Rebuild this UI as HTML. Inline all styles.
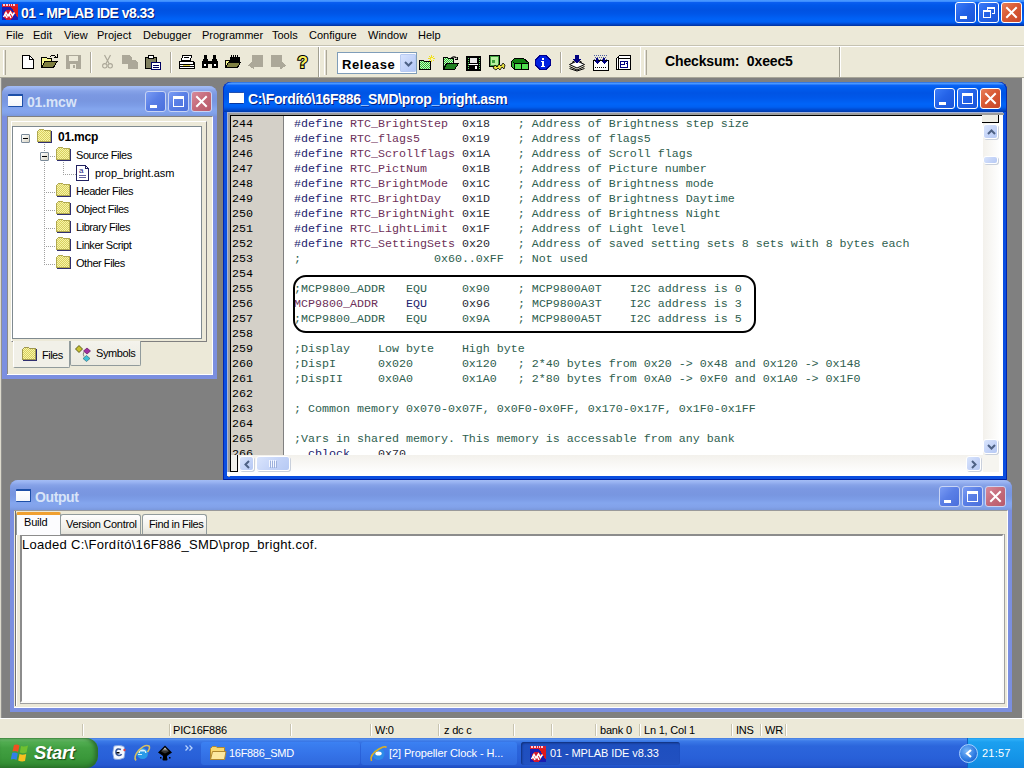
<!DOCTYPE html>
<html><head><meta charset="utf-8">
<style>
*{margin:0;padding:0;box-sizing:border-box}
html,body{width:1024px;height:768px;overflow:hidden;background:#808080;font-family:"Liberation Sans",sans-serif;font-size:11px;color:#000}
.a{position:absolute}
svg{position:absolute;overflow:visible}
#title{left:0;top:0;width:1024px;height:26px;background:linear-gradient(#4d9cff 0,#3a8cff 1.5px,#0a5ef0 2.5px,#0058ea 5px,#0052e2 10px,#0056e8 14px,#0062f6 19px,#0060f4 22px,#0048d0 24px,#00309a 26px)}
#title .t{left:21px;top:5px;color:#fff;font-weight:bold;font-size:14px;letter-spacing:-0.55px;text-shadow:1px 1px 0 #0a1e78;}
#menu{left:0;top:26px;width:1024px;height:19px;background:#ece9d8}
#menu span{position:absolute;top:3px}
#tb{left:0;top:47px;width:1024px;height:31px;background:#ece9d8}
.grip{position:absolute;width:3px;border-left:1px solid #fff;border-right:1px solid #aca899;background:#e0ddd0}
.vsep{position:absolute;width:2px;border-left:1px solid #aca899;border-right:1px solid #fff}
.win{position:absolute;border-radius:8px 8px 0 0}
.ttl{position:absolute;left:0;top:0;right:0;height:30px;border-radius:8px 8px 0 0}
.act{background:#0a4ee0;box-shadow:inset 1px 0 0 #0026b0,inset -1px 0 0 #0026b0,inset 0 -1px 0 #0020a0}
.act .ttl{background:linear-gradient(#1050c8 0,#5aa2ff 1px,#3a8cff 2px,#0a62f4 3.5px,#005cee 6px,#0054e4 11px,#0058ea 16px,#0064f8 22px,#0060f2 25px,#0048cc 28px,#003aa8 30px);box-shadow:inset 1px 0 0 #0a30b8,inset -1px 0 0 #0a2aa8}
.ina{background:#7b8fe0}
.ina .ttl{background:linear-gradient(#a4bdf4 0,#9ab4f2 2px,#86a2e8 5px,#7b98e2 9px,#7896e0 15px,#7c9ce6 19px,#84a6ee 23px,#82a2ea 27px,#7a98dc 30px)}
.ttl .tx{position:absolute;top:8px;left:25px;font-weight:bold;font-size:14px;white-space:pre}
.act .ttl .tx{color:#fff;text-shadow:1px 1px 0 #0a2080}
.ina .ttl .tx{color:#d8e4f8}
.wico{position:absolute;left:6px;top:9px;width:15px;height:13px;background:linear-gradient(#fff,#f4f6fa);border-top:2px solid #1d4fa8;border-right:1px solid #1d4fa8;border-bottom:1px solid #1d4fa8;border-radius:1px}
.act .wico{border-color:#fff;background:#fff}
.cli{position:absolute;background:#ece9d8}
.mono{font-family:"Liberation Mono",monospace}
.code{position:absolute;left:294px;top:117px;font-family:"Liberation Mono",monospace;font-size:11.667px;line-height:15px;white-space:pre;color:#000}
.code i{font-style:normal}
.d{color:#22226e}.s{color:#6e3059}.n{color:#2a2a34}.c{color:#2e5e4e}
.sbtn{position:absolute;border:1px solid #fff;border-radius:3px;background:linear-gradient(135deg,#dae5fc 0,#c6d5f8 50%,#b6c9f4 100%);box-shadow:1px 1px 0 #c9d0dc}
.trk{position:absolute;background:#fdfdfa}
.st{position:absolute;top:5px;white-space:pre;letter-spacing:-0.2px}
.ssep{position:absolute;top:5px;width:2px;height:12px;background:#c8c4b0;border-right:1px solid #fff}
.tabtx{position:absolute;white-space:pre}
.cli span{white-space:pre}
.task{position:absolute;top:742px;height:23px;border-radius:3px;background:linear-gradient(#3c81f3 0,#3a7ef0 2px,#3573e8 12px,#2f68dc 24px);color:#fff;font-size:11px}
.task span{position:absolute;top:5px;white-space:pre;letter-spacing:-0.3px}
</style></head><body>

<!-- ============ TITLE ============ -->
<div id="title" class="a">
  <svg style="left:2px;top:4px" width="16" height="16" shape-rendering="crispEdges"><rect x="0" y="0" width="16" height="16" fill="#1c1cb0"/><rect x="0" y="0" width="16" height="3" fill="#d82030"/><path d="M1 1 H3 M4 1 H6 M7 1 H8 M9 1 H10 M11 1 H13" stroke="#ffd0d0" stroke-width="1.2"/><path d="M9 3 H16 V14Z" fill="#e01818"/><circle cx="6.5" cy="11" r="5" fill="#d01830"/><path d="M1.5 13 L4 8.5 L6 12 L8.5 8 L10.5 11.5 L12.5 8.5 M3 10.5 L5 14 M7 10 L9 14" stroke="#fff" stroke-width="1.5" fill="none" shape-rendering="auto"/></svg>
  <div class="a t">01 - MPLAB IDE v8.33</div>
  <div class="a" style="left:955px;top:2px;width:21px;height:21px;border:1px solid #fff;border-radius:3px;background:linear-gradient(135deg,#3c7cf8 0,#2463e8 45%,#1a55d8 100%)"><div class="a" style="left:4px;top:13px;width:7px;height:3px;background:#fff"></div></div><div class="a" style="left:978px;top:2px;width:21px;height:21px;border:1px solid #fff;border-radius:3px;background:linear-gradient(135deg,#3c7cf8 0,#2463e8 45%,#1a55d8 100%)"><div class="a" style="left:8px;top:4px;width:8px;height:7px;border-top:2px solid #fff;border-right:1px solid #fff"></div><div class="a" style="left:8px;top:4px;width:1px;height:3px;background:#fff"></div><div class="a" style="left:4px;top:7px;width:8px;height:8px;border:1px solid #fff;border-top:2px solid #fff"></div><div class="a" style="left:13px;top:10px;width:3px;height:1px;background:#fff"></div></div><div class="a" style="left:1001px;top:2px;width:21px;height:21px;border:1px solid #fff;border-radius:3px;background:linear-gradient(135deg,#e8805a 0,#d85a34 45%,#c8462a 100%)"><svg style="left:0;top:0" width="19" height="19"><path d="M5 5 L14 14 M14 5 L5 14" stroke="#fff" stroke-width="2" stroke-linecap="square"/></svg></div>
</div>

<!-- ============ MENU ============ -->
<div id="menu" class="a">
  <span style="left:6px">File</span><span style="left:33px">Edit</span><span style="left:64px">View</span><span style="left:97px">Project</span><span style="left:143px">Debugger</span><span style="left:202px">Programmer</span><span style="left:272px">Tools</span><span style="left:309px">Configure</span><span style="left:368px">Window</span><span style="left:418px">Help</span>
</div>
<div class="a" style="left:0;top:45px;width:1024px;height:1px;background:#c5c2b2"></div>
<div class="a" style="left:0;top:46px;width:1024px;height:1px;background:#fff"></div>

<!-- ============ TOOLBAR ============ -->
<div id="tb" class="a">
  <div class="grip" style="left:3px;top:3px;height:25px"></div><svg style="left:22px;top:8px" width="12" height="14" shape-rendering="crispEdges"><path d="M0.5 0.5 H7.5 L11.5 4.5 V13.5 H0.5Z" fill="#fff" stroke="#000"/><path d="M7.5 0.5 V4.5 H11.5" fill="none" stroke="#000"/></svg><svg style="left:41px;top:7px" width="17" height="15" shape-rendering="crispEdges"><path d="M0.5 3.5 H5.5 L6.5 4.5 H10.5 V13.5 H0.5Z" fill="#f8f890" stroke="#000"/><path d="M0.5 13.5 L4 7.5 H16 L12.5 13.5Z" fill="#808040" stroke="#000"/><path d="M9 3 Q12 0 15 3" fill="none" stroke="#000"/><path d="M13 3 H16 V0" fill="none" stroke="#000"/></svg><svg style="left:66px;top:8px" width="15" height="14" shape-rendering="crispEdges"><rect x="0" y="0" width="15" height="14" fill="#aca899"/><rect x="3" y="1" width="9" height="5" fill="#ece9d8"/><rect x="4" y="9" width="6" height="5" fill="#ece9d8"/><rect x="7" y="10" width="2" height="3" fill="#aca899"/></svg><div class="vsep" style="left:90px;top:5px;height:21px"></div><svg style="left:102px;top:8px" width="11" height="14"><path d="M2.5 0 L7 8.5 M8.5 0 L4 8.5" stroke="#aca899" stroke-width="1.2" fill="none"/><circle cx="2.8" cy="10.8" r="2.2" fill="none" stroke="#aca899" stroke-width="1.1"/><circle cx="8.2" cy="10.8" r="2.2" fill="none" stroke="#aca899" stroke-width="1.1"/></svg><svg style="left:122px;top:8px" width="16" height="14" shape-rendering="crispEdges"><path d="M0 0 H7 L10 3 V5 H13 L16 8 V14 H6 V9 H0Z" fill="#aca899"/></svg><svg style="left:145px;top:8px" width="16" height="15" shape-rendering="crispEdges"><rect x="0.5" y="2.5" width="11" height="11" fill="#808060" stroke="#000"/><rect x="3.5" y="0.5" width="5" height="3" fill="#fff" stroke="#000"/><rect x="6.5" y="7.5" width="9" height="7" fill="#fff" stroke="#000060"/><path d="M8 10.5 H14 M8 12.5 H14" stroke="#000060"/></svg><div class="vsep" style="left:170px;top:5px;height:21px"></div><svg style="left:179px;top:8px" width="16" height="15" shape-rendering="crispEdges"><path d="M3.5 0.5 H12.5 L11.5 5.5 H2.5Z" fill="#fff" stroke="#000"/><path d="M5 2.5 H10" stroke="#000"/><path d="M0.5 6.5 H14.5 L15.5 8 V13.5 H0.5Z" fill="#fff" stroke="#000"/><path d="M0.5 9.5 H15.5 M1 11.5 H15" stroke="#000"/><rect x="4" y="10" width="7" height="1" fill="#e0d040"/><path d="M14.5 6.5 V9" stroke="#000"/></svg><svg style="left:202px;top:8px" width="16" height="14" shape-rendering="crispEdges"><path d="M1 4 H6 V13 H0 V8Z M10 4 H15 L16 8 V13 H10Z M2 0 H5 V4 H2Z M11 0 H14 V4 H11Z M6 6 H10 V9 H6Z" fill="#000"/><rect x="2" y="9" width="2" height="2" fill="#fff"/><rect x="12" y="9" width="2" height="2" fill="#fff"/></svg><svg style="left:225px;top:7px" width="16" height="15" shape-rendering="crispEdges"><path d="M0.5 6.5 H4.5 V13.5 H0.5Z" fill="#f8f890" stroke="#000"/><path d="M0.5 13.5 L3.5 8.5 H15.5 L12.5 13.5Z" fill="#808040" stroke="#000"/><path d="M5 8 V3 H6 V1 H7 V3 H8 V1 H9 V3 H10 V1 H11 V3 H12 V1 H13 V3 H15 V8Z" fill="#000"/></svg><svg style="left:248px;top:8px" width="16" height="16" shape-rendering="crispEdges"><path d="M4 0 H15 V12 H6 V14.5 L0 10.5 L4 6.5Z" fill="#aca899"/></svg><svg style="left:271px;top:8px" width="16" height="16" shape-rendering="crispEdges"><path d="M0 0 H11 V6.5 L15 10.5 L9 14.5 V12 H0Z" fill="#aca899"/></svg><svg style="left:296px;top:7px" width="14" height="17"><text x="1.5" y="14" font-family="Liberation Sans" font-weight="bold" font-size="17" fill="#f8f060" stroke="#000" stroke-width="2.2" paint-order="stroke">?</text></svg><div class="a" style="left:318px;top:0;width:1px;height:30px;background:#a09e90"></div><div class="a" style="left:319px;top:0;width:1px;height:30px;background:#fff"></div><div class="grip" style="left:324px;top:3px;height:25px"></div><div class="a" style="left:337px;top:5px;width:80px;height:22px;border:1px solid #7f9db9;background:#fff"><span class="a" style="left:4px;top:4px;font-weight:bold;font-size:13px;letter-spacing:0.6px">Release</span><div class="a" style="left:62px;top:1px;width:16px;height:18px;border:1px solid #b8cbf2;border-radius:1px;background:linear-gradient(135deg,#d6e2fd,#b2c6f6)"><svg style="left:3px;top:6px" width="9" height="6"><path d="M1 1 L4.5 4.5 L8 1" stroke="#4d6185" stroke-width="2" fill="none"/></svg></div></div><svg style="left:419px;top:8px" width="18" height="16" shape-rendering="crispEdges"><defs><pattern id="dg1" width="2" height="2" patternUnits="userSpaceOnUse"><rect width="2" height="2" fill="#c8f0c8"/><rect width="1" height="1" fill="#30c030"/><rect x="1" y="1" width="1" height="1" fill="#30c030"/></pattern></defs><path d="M0.5 5.5 H4.5 L5.5 6.5 H11.5 V14.5 H0.5Z" fill="url(#dg1)" stroke="#000"/><path d="M12.5 0 V7 M9 3.5 H16 M10 1 L15 6 M15 1 L10 6" stroke="#f0e020" stroke-width="1"/><rect x="11.5" y="2.5" width="2" height="2" fill="#fff8a0"/></svg><svg style="left:443px;top:9px" width="16" height="15" shape-rendering="crispEdges"><defs><pattern id="dg2" width="2" height="2" patternUnits="userSpaceOnUse"><rect width="2" height="2" fill="#c8f0c8"/><rect width="1" height="1" fill="#30c030"/><rect x="1" y="1" width="1" height="1" fill="#30c030"/></pattern></defs><path d="M0.5 1.5 H4.5 L5.5 2.5 H10.5 V13.5 H0.5Z" fill="url(#dg2)" stroke="#000"/><path d="M0.5 13.5 L3.5 7.5 H15.5 L11.5 13.5Z" fill="#208020" stroke="#000"/><path d="M8 2.5 Q10.5 -0.5 13.5 2" fill="none" stroke="#000" stroke-width="1.2" shape-rendering="auto"/><path d="M11.5 3.5 H14.5 V0.5" fill="none" stroke="#000"/></svg><svg style="left:466px;top:9px" width="15" height="15" shape-rendering="crispEdges"><rect x="0.5" y="0.5" width="14" height="14" fill="#fff" stroke="#000"/><rect x="1" y="1" width="2" height="13" fill="#000"/><rect x="12" y="1" width="2" height="13" fill="#000"/><path d="M2 2 V13 M13 2 V13" stroke="#60e060" stroke-dasharray="1 1"/><rect x="3.5" y="1.5" width="8" height="6" fill="#e8e8e8" stroke="#000"/><rect x="3" y="9" width="9" height="5" fill="#000"/><rect x="9" y="10" width="2" height="3" fill="#fff"/></svg><svg style="left:489px;top:8px" width="17" height="16" shape-rendering="crispEdges"><rect x="0.5" y="0.5" width="10" height="11" fill="#40a040" stroke="#000"/><rect x="2" y="2" width="7" height="8" fill="#b8f0a0"/><path d="M3 5 H6 V8 H3Z" fill="#40a040"/><path d="M4 13 L6 10 L8 12 L10 9 L12 11 L14 8 L16 10 L15 14 L13 12 L11 15 L9 13 L7 15Z" fill="#e8e040" stroke="#000" stroke-width="0.8" shape-rendering="auto"/></svg><svg style="left:511px;top:11px" width="18" height="13" shape-rendering="crispEdges"><path d="M0.5 3.5 L3.5 0.5 H12.5 L17.5 4.5 V11.5 H3.5 L0.5 8.5Z" fill="#108010" stroke="#000"/><path d="M0.5 3.5 L3.5 5.5 H17.5 M3.5 5.5 V11.5" stroke="#000" fill="none"/><rect x="4" y="6" width="6" height="5" fill="#50e050"/><rect x="11" y="6" width="6" height="5" fill="#50e050"/><path d="M10.5 6 V11" stroke="#000"/><path d="M1 4 L3 5.5 V10 L1 8.5Z" fill="#30b030"/></svg><svg style="left:535px;top:8px" width="16" height="15" shape-rendering="crispEdges"><path d="M5 0.5 H11 L15.5 5 V10 L11 14.5 H5 L0.5 10 V5Z" fill="#0020e0" stroke="#000090"/><rect x="7" y="2.5" width="2" height="2" fill="#fff"/><path d="M6 6 H9 V11 H10 V12 H6 V11 H7 V7 H6Z" fill="#fff"/></svg><div class="vsep" style="left:560px;top:5px;height:21px"></div><svg style="left:569px;top:8px" width="16" height="16" shape-rendering="crispEdges"><path d="M0.5 9.5 L8 6 L15.5 9.5 L8 13Z" fill="#fff" stroke="#000" shape-rendering="auto"/><path d="M0.5 11.5 L8 15 L15.5 11.5 M0.5 13.5 L8 16 L15.5 13.5" stroke="#000" fill="none" shape-rendering="auto"/><path d="M3 7.5 L8 4 L13 7.5" stroke="#000" fill="none" shape-rendering="auto"/><path d="M6 0 H10 V4 H12.5 L8 8.5 L3.5 4 H6Z" fill="#000080"/></svg><svg style="left:593px;top:8px" width="16" height="16" shape-rendering="crispEdges"><path d="M1 0.5 H15 M2 2.5 H14 M1 4.5 H15" stroke="#5060a0" stroke-dasharray="1 1"/><rect x="0.5" y="5.5" width="15" height="10" fill="#fff" stroke="#000"/><path d="M3 3 H5 V6 H7 L4 9 L1 6 H3Z M10 3 H12 V6 H14 L11 9 L8 6 H10Z" fill="#000080"/><path d="M2 12.5 H14" stroke="#000" stroke-dasharray="1 1"/></svg><svg style="left:616px;top:8px" width="15" height="15" shape-rendering="crispEdges"><path d="M3.5 0.5 H14.5 V14.5 H0.5 V3.5Z" fill="#fff" stroke="#000"/><path d="M2 3.5 H13.5 M2 2 V14" stroke="#000" fill="none"/><path d="M4.5 6.5 H11.5 V12.5 H4.5Z M4.5 9.5 H8.5 V6.5" stroke="#000080" fill="none"/><rect x="10" y="8" width="1" height="1" fill="#000080"/></svg><div class="a" style="left:640px;top:0;width:1px;height:30px;background:#fff"></div><div class="grip" style="left:644px;top:3px;height:25px"></div><span class="a" style="left:665px;top:6px;font-weight:bold;font-size:14px;white-space:pre;letter-spacing:-0.13px">Checksum:  0xeec5</span><div class="a" style="left:839px;top:0;width:1px;height:30px;background:#a09e90"></div><div class="a" style="left:840px;top:0;width:1px;height:30px;background:#fff"></div>
</div>
<div class="a" style="left:0;top:77px;width:1024px;height:1px;background:#a8a698"></div>

<!-- ============ MDI ============ -->
<div class="a" style="left:0;top:78px;width:1px;height:640px;background:#dcd9cc"></div><div class="a" style="left:1px;top:78px;width:1px;height:640px;background:#929290"></div>
<div class="a" style="left:1022px;top:78px;width:2px;height:640px;background:#f4f3ee"></div>

<div class="win ina" style="left:2px;top:86px;width:215px;height:293px"><div class="ttl"><div class="wico" style="left:6px;top:8px"></div><div class="tx" style="left:25px;top:8px;letter-spacing:-0.2px">01.mcw</div><div class="a" style="left:143px;top:5px;width:21px;height:21px;border:1px solid #c8d4f4;border-radius:3px;background:linear-gradient(135deg,#7a9cf4 0,#5a7fe6 45%,#4a6fdc 100%)"><div class="a" style="left:4px;top:13px;width:7px;height:3px;background:#fff"></div></div><div class="a" style="left:166px;top:5px;width:21px;height:21px;border:1px solid #c8d4f4;border-radius:3px;background:linear-gradient(135deg,#7a9cf4 0,#5a7fe6 45%,#4a6fdc 100%)"><div class="a" style="left:4px;top:4px;width:11px;height:11px;border:1px solid #fff;border-top:3px solid #fff"></div></div><div class="a" style="left:189px;top:5px;width:21px;height:21px;border:1px solid #c8d4f4;border-radius:3px;background:linear-gradient(135deg,#d88a9a 0,#c46a7a 50%,#b85a6a 100%)"><svg style="left:0;top:0" width="19" height="19"><path d="M5 5 L14 14 M14 5 L5 14" stroke="#fff" stroke-width="2" stroke-linecap="square"/></svg></div></div><div class="cli" style="left:5px;top:30px;width:206px;height:259px;border-top:1px solid #808080;border-right:1px solid #fff;border-bottom:1px solid #fff"><div class="a" style="left:0;top:0;width:1px;height:257px;background:#8a8a8a"></div><div class="a" style="left:4px;top:4px;width:196px;height:221px;border-top:1px solid #fff;border-left:1px solid #fff;border-right:1px solid #808080;border-bottom:1px solid #808080"></div><div class="a" style="left:5px;top:9px;width:190px;height:213px;background:#fff;border:1px solid #7f8a90"><div class="a" style="left:31px;top:17px;width:1px;height:121px;background:repeating-linear-gradient(#a0a0a0 0 1px,transparent 1px 2px)"></div><div class="a" style="left:31px;top:29px;width:12px;height:1px;background:repeating-linear-gradient(90deg,#a0a0a0 0 1px,transparent 1px 2px)"></div><div class="a" style="left:31px;top:65px;width:12px;height:1px;background:repeating-linear-gradient(90deg,#a0a0a0 0 1px,transparent 1px 2px)"></div><div class="a" style="left:31px;top:83px;width:12px;height:1px;background:repeating-linear-gradient(90deg,#a0a0a0 0 1px,transparent 1px 2px)"></div><div class="a" style="left:31px;top:101px;width:12px;height:1px;background:repeating-linear-gradient(90deg,#a0a0a0 0 1px,transparent 1px 2px)"></div><div class="a" style="left:31px;top:119px;width:12px;height:1px;background:repeating-linear-gradient(90deg,#a0a0a0 0 1px,transparent 1px 2px)"></div><div class="a" style="left:31px;top:137px;width:12px;height:1px;background:repeating-linear-gradient(90deg,#a0a0a0 0 1px,transparent 1px 2px)"></div><div class="a" style="left:50px;top:35px;width:1px;height:13px;background:repeating-linear-gradient(#a0a0a0 0 1px,transparent 1px 2px)"></div><div class="a" style="left:50px;top:47px;width:13px;height:1px;background:repeating-linear-gradient(90deg,#a0a0a0 0 1px,transparent 1px 2px)"></div><div class="a" style="left:8px;top:7px;width:9px;height:9px;border:1px solid #7a8a99;border-radius:1px;background:linear-gradient(135deg,#fff,#d8d4c4)"><div class="a" style="left:1px;top:3px;width:5px;height:1px;background:#000"></div></div><div class="a" style="left:27px;top:25px;width:9px;height:9px;border:1px solid #7a8a99;border-radius:1px;background:linear-gradient(135deg,#fff,#d8d4c4)"><div class="a" style="left:1px;top:3px;width:5px;height:1px;background:#000"></div></div><svg style="left:24px;top:2px" width="16" height="14" shape-rendering="crispEdges"><path d="M0.5 2.5 L2.5 0.5 H6.5 L7.5 1.5 H13.5 V12.5 H0.5Z" fill="url(#yd)" stroke="#b0a850"/><path d="M1 13.5 H14.5 V2" stroke="#303070" fill="none"/></svg><span class="a" style="left:45px;top:3px;font-weight:bold;font-size:12px;letter-spacing:-0.2px">01.mcp</span><svg style="left:43px;top:20px" width="16" height="14" shape-rendering="crispEdges"><path d="M0.5 2.5 L2.5 0.5 H6.5 L7.5 1.5 H13.5 V12.5 H0.5Z" fill="url(#yd)" stroke="#b0a850"/><path d="M1 13.5 H14.5 V2" stroke="#303070" fill="none"/></svg><span class="a" style="left:63px;top:22px;white-space:pre;letter-spacing:-0.45px">Source Files</span><svg style="left:43px;top:56px" width="16" height="14" shape-rendering="crispEdges"><path d="M0.5 2.5 L2.5 0.5 H6.5 L7.5 1.5 H13.5 V12.5 H0.5Z" fill="url(#yd)" stroke="#b0a850"/><path d="M1 13.5 H14.5 V2" stroke="#303070" fill="none"/></svg><span class="a" style="left:63px;top:58px;white-space:pre;letter-spacing:-0.45px">Header Files</span><svg style="left:43px;top:74px" width="16" height="14" shape-rendering="crispEdges"><path d="M0.5 2.5 L2.5 0.5 H6.5 L7.5 1.5 H13.5 V12.5 H0.5Z" fill="url(#yd)" stroke="#b0a850"/><path d="M1 13.5 H14.5 V2" stroke="#303070" fill="none"/></svg><span class="a" style="left:63px;top:76px;white-space:pre;letter-spacing:-0.45px">Object Files</span><svg style="left:43px;top:92px" width="16" height="14" shape-rendering="crispEdges"><path d="M0.5 2.5 L2.5 0.5 H6.5 L7.5 1.5 H13.5 V12.5 H0.5Z" fill="url(#yd)" stroke="#b0a850"/><path d="M1 13.5 H14.5 V2" stroke="#303070" fill="none"/></svg><span class="a" style="left:63px;top:94px;white-space:pre;letter-spacing:-0.45px">Library Files</span><svg style="left:43px;top:110px" width="16" height="14" shape-rendering="crispEdges"><path d="M0.5 2.5 L2.5 0.5 H6.5 L7.5 1.5 H13.5 V12.5 H0.5Z" fill="url(#yd)" stroke="#b0a850"/><path d="M1 13.5 H14.5 V2" stroke="#303070" fill="none"/></svg><span class="a" style="left:63px;top:112px;white-space:pre;letter-spacing:-0.45px">Linker Script</span><svg style="left:43px;top:128px" width="16" height="14" shape-rendering="crispEdges"><path d="M0.5 2.5 L2.5 0.5 H6.5 L7.5 1.5 H13.5 V12.5 H0.5Z" fill="url(#yd)" stroke="#b0a850"/><path d="M1 13.5 H14.5 V2" stroke="#303070" fill="none"/></svg><span class="a" style="left:63px;top:130px;white-space:pre;letter-spacing:-0.45px">Other Files</span><svg style="left:63px;top:38px" width="14" height="16" shape-rendering="crispEdges"><path d="M0.5 0.5 H9.5 L12.5 3.5 V15.5 H0.5Z" fill="#fff" stroke="#202060"/><path d="M9.5 0.5 V3.5 H12.5" stroke="#202060" fill="none"/><text x="3" y="8" font-size="8" font-family="Liberation Sans" fill="#202080">a</text><path d="M3 10.5 H10 M3 12.5 H10" stroke="#6060a0"/></svg><span class="a" style="left:82px;top:40px;white-space:pre">prop_bright.asm</span></div><div class="a" style="left:6px;top:224px;width:57px;height:27px;background:#f1f0e8;border-left:1px solid #fff;border-right:1px solid #919b9c;border-bottom:1px solid #919b9c;border-radius:0 0 2px 2px"><svg style="left:8px;top:6px" width="16" height="14" shape-rendering="crispEdges"><defs><pattern id="yd" width="2" height="2" patternUnits="userSpaceOnUse"><rect width="2" height="2" fill="#f8f4a8"/><rect width="1" height="1" fill="#d8d060"/><rect x="1" y="1" width="1" height="1" fill="#d8d060"/></pattern></defs><path d="M0.5 2.5 L2.5 0.5 H6.5 L7.5 1.5 H13.5 V12.5 H0.5Z" fill="url(#yd)" stroke="#a09850"/><path d="M1 13.5 H14.5 V2" stroke="#303070" fill="none"/></svg><span class="a" style="left:28px;top:8px;letter-spacing:-0.5px">Files</span></div><div class="a" style="left:63px;top:224px;width:71px;height:25px;background:linear-gradient(#f4f3ec,#ebeae0);border-left:1px solid #919b9c;border-right:1px solid #919b9c;border-bottom:1px solid #919b9c;border-radius:0 0 2px 2px"><svg style="left:4px;top:4px" width="17" height="17"><path d="M0.5 4 L4 0.5 L7.5 4 L4 7.5Z" fill="#c8c030" stroke="#404000" stroke-width="0.8"/><path d="M8.5 6 L12 3 L15.5 6 L12 9Z" fill="#a030a0" stroke="#500050" stroke-width="0.6"/><path d="M9 7 Q7.5 9 9 11.5" stroke="#808080" stroke-width="1" fill="none"/><path d="M8 13.5 L11.5 10.5 L15 13.5 L11.5 16.5Z" fill="#40c0d8" stroke="#206070" stroke-width="0.6"/></svg><span class="a" style="left:25px;top:6px;letter-spacing:-0.4px">Symbols</span></div></div></div>

<div class="win act" style="left:223px;top:82px;width:784px;height:398px"><div class="ttl"><div class="wico" style="left:6px;top:10px;height:12px;background:#fff;border-top:1px solid #2050b0;border-right:none;border-bottom:1px solid #0838a0"></div><div class="tx" style="left:25px;top:9px;letter-spacing:-0.33px">C:\Fordító\16F886_SMD\prop_bright.asm</div><div class="a" style="left:711px;top:6px;width:21px;height:21px;border:1px solid #fff;border-radius:3px;background:linear-gradient(135deg,#3c7cf8 0,#2463e8 45%,#1a55d8 100%)"><div class="a" style="left:4px;top:13px;width:7px;height:3px;background:#fff"></div></div><div class="a" style="left:734px;top:6px;width:21px;height:21px;border:1px solid #fff;border-radius:3px;background:linear-gradient(135deg,#3c7cf8 0,#2463e8 45%,#1a55d8 100%)"><div class="a" style="left:4px;top:4px;width:11px;height:11px;border:1px solid #fff;border-top:3px solid #fff"></div></div><div class="a" style="left:757px;top:6px;width:21px;height:21px;border:1px solid #fff;border-radius:3px;background:linear-gradient(135deg,#e8805a 0,#d85a34 45%,#c8462a 100%)"><svg style="left:0;top:0" width="19" height="19"><path d="M5 5 L14 14 M14 5 L5 14" stroke="#fff" stroke-width="2" stroke-linecap="square"/></svg></div></div><div class="a" style="left:4px;top:30px;width:776px;height:364px;background:#fff;border-top:1px solid #a4b4dc;border-left:1px solid #a4b4dc"><div class="a" style="left:0;top:0;width:776px;height:2px;background:#9c9c9c"></div><div class="a" style="left:0;top:0;width:2px;height:364px;background:#9c9c9c"></div><div class="a" style="left:2px;top:2px;width:1px;height:360px;background:#000"></div><div class="a" style="left:2px;top:2px;width:770px;height:1px;background:#000"></div></div></div><div class="a" style="left:231px;top:116px;width:52px;height:339px;background:#d4d0c8"></div><div class="a" style="left:283px;top:116px;width:1px;height:339px;background:#808080"></div><div class="code" style="left:232px;color:#000">244
245
246
247
248
249
250
251
252
253
254
255
256
257
258
259
260
261
262
263
264
265
266</div><div class="a" style="left:284px;top:116px;width:699px;height:339px;overflow:hidden"><div class="code" style="left:10px;top:1px"><i class="d">#define </i><i class="s">RTC_BrightStep  </i><i class="n">0x18</i>    <i class="c">; Address of Brightness step size</i>
<i class="d">#define </i><i class="s">RTC_flags5      </i><i class="n">0x19</i>    <i class="c">; Address of flags5</i>
<i class="d">#define </i><i class="s">RTC_Scrollflags </i><i class="n">0x1A</i>    <i class="c">; Address of Scroll flags</i>
<i class="d">#define </i><i class="s">RTC_PictNum     </i><i class="n">0x1B</i>    <i class="c">; Address of Picture number</i>
<i class="d">#define </i><i class="s">RTC_BrightMode  </i><i class="n">0x1C</i>    <i class="c">; Address of Brightness mode</i>
<i class="d">#define </i><i class="s">RTC_BrightDay   </i><i class="n">0x1D</i>    <i class="c">; Address of Brightness Daytime</i>
<i class="d">#define </i><i class="s">RTC_BrightNight </i><i class="n">0x1E</i>    <i class="c">; Address of Brightness Night</i>
<i class="d">#define </i><i class="s">RTC_LightLimit  </i><i class="n">0x1F</i>    <i class="c">; Address of Light level</i>
<i class="d">#define </i><i class="s">RTC_SettingSets </i><i class="n">0x20</i>    <i class="c">; Address of saved setting sets 8 sets with 8 bytes each</i>
<i class="c">;                   0x60..0xFF  ; Not used</i>

<i class="c">;MCP9800_ADDR   EQU     0x90    ; MCP9800A0T    I2C address is 0</i>
<i class="s">MCP9800_ADDR</i>    <i class="d">EQU</i>     <i class="n">0x96</i>    <i class="c">; MCP9800A3T    I2C address is 3</i>
<i class="c">;MCP9800_ADDR   EQU     0x9A    ; MCP9800A5T    I2C address is 5</i>

<i class="c">;Display    Low byte    High byte</i>
<i class="c">;DispI      0x020       0x120   ; 2*40 bytes from 0x20 -&gt; 0x48 and 0x120 -&gt; 0x148</i>
<i class="c">;DispII     0x0A0       0x1A0   ; 2*80 bytes from 0xA0 -&gt; 0xF0 and 0x1A0 -&gt; 0x1F0</i>

<i class="c">; Common memory 0x070-0x07F, 0x0F0-0x0FF, 0x170-0x17F, 0x1F0-0x1FF</i>

<i class="c">;Vars in shared memory. This memory is accessable from any bank</i>
  <i class="d">cblock</i>    <i class="n">0x70</i></div></div><div class="a" style="left:293px;top:275px;width:463px;height:58px;border:2px solid #000;border-radius:13px"></div><div class="trk" style="left:983px;top:116px;width:16px;height:339px;background:linear-gradient(90deg,#f3f1ec,#fefefe)"></div><div class="a" style="left:982px;top:115px;width:17px;height:8px;background:#efeee6;border-bottom:1px solid #000;border-right:1px solid #000"></div><div class="sbtn" style="left:983px;top:124px;width:15px;height:15px"><svg style="left:3px;top:4px" width="9" height="6"><path d="M1 5 L4.5 1.5 L8 5" stroke="#4d6185" stroke-width="2" fill="none"/></svg></div><div class="sbtn" style="left:983px;top:156px;width:15px;height:8px"></div><div class="sbtn" style="left:983px;top:439px;width:15px;height:15px"><svg style="left:3px;top:4px" width="9" height="6"><path d="M1 1 L4.5 4.5 L8 1" stroke="#4d6185" stroke-width="2" fill="none"/></svg></div><div class="trk" style="left:230px;top:455px;width:753px;height:17px;background:linear-gradient(#f3f1ec,#fefefe)"></div><div class="a" style="left:230px;top:455px;width:8px;height:17px;background:#f2f1ec;border:1px solid #000;border-top:none"></div><div class="sbtn" style="left:239px;top:456px;width:15px;height:15px"><svg style="left:4px;top:3px" width="6" height="9"><path d="M5 1 L1.5 4.5 L5 8" stroke="#4d6185" stroke-width="2" fill="none"/></svg></div><div class="sbtn" style="left:256px;top:456px;width:34px;height:15px"><svg style="left:12px;top:3px" width="9" height="8" shape-rendering="crispEdges"><path d="M0.5 0 V7 M2.5 0 V7 M4.5 0 V7 M6.5 0 V7" stroke="#f4f7ff"/><path d="M1.5 1 V8 M3.5 1 V8 M5.5 1 V8 M7.5 1 V8" stroke="#9cb0dc"/></svg></div><div class="sbtn" style="left:966px;top:456px;width:15px;height:15px"><svg style="left:4px;top:3px" width="6" height="9"><path d="M1 1 L4.5 4.5 L1 8" stroke="#4d6185" stroke-width="2" fill="none"/></svg></div><div class="a" style="left:983px;top:455px;width:16px;height:17px;background:#f6f5f0"></div><div class="a" style="left:999px;top:115px;width:4px;height:361px;background:#fff"></div><div class="a" style="left:227px;top:472px;width:776px;height:4px;background:#fff"></div>

<div class="win ina" style="left:10px;top:480px;width:1002px;height:232px"><div class="ttl"><div class="wico" style="left:6px;top:9px"></div><div class="tx" style="left:25px;top:9px;letter-spacing:-0.4px">Output</div><div class="a" style="left:929px;top:6px;width:21px;height:21px;border:1px solid #c8d4f4;border-radius:3px;background:linear-gradient(135deg,#7a9cf4 0,#5a7fe6 45%,#4a6fdc 100%)"><div class="a" style="left:4px;top:13px;width:7px;height:3px;background:#fff"></div></div><div class="a" style="left:952px;top:6px;width:21px;height:21px;border:1px solid #c8d4f4;border-radius:3px;background:linear-gradient(135deg,#7a9cf4 0,#5a7fe6 45%,#4a6fdc 100%)"><div class="a" style="left:4px;top:4px;width:11px;height:11px;border:1px solid #fff;border-top:3px solid #fff"></div></div><div class="a" style="left:975px;top:6px;width:21px;height:21px;border:1px solid #c8d4f4;border-radius:3px;background:linear-gradient(135deg,#d88a9a 0,#c46a7a 50%,#b85a6a 100%)"><svg style="left:0;top:0" width="19" height="19"><path d="M5 5 L14 14 M14 5 L5 14" stroke="#fff" stroke-width="2" stroke-linecap="square"/></svg></div></div><div class="cli" style="left:4px;top:30px;width:994px;height:198px;border-top:1px solid #9a9a9a;border-right:1px solid #fff;border-bottom:1px solid #fff"><div class="a" style="left:2px;top:1px;width:45px;height:23px;background:#fcfcfe;border-left:1px solid #919b9c;border-right:1px solid #919b9c;border-top:3px solid #f0a030;border-radius:2px 2px 0 0;z-index:2"><span class="a" style="left:7px;top:1px;letter-spacing:-0.2px">Build</span></div><div class="a" style="left:46px;top:3px;width:81px;height:20px;background:linear-gradient(#fefefe,#f0efe8 70%,#e4e2da);border:1px solid #919b9c;border-bottom:none;border-radius:3px 3px 0 0"><span class="a" style="left:5px;top:3px;letter-spacing:-0.3px">Version Control</span></div><div class="a" style="left:128px;top:3px;width:65px;height:20px;background:linear-gradient(#fefefe,#f0efe8 70%,#e4e2da);border:1px solid #919b9c;border-bottom:none;border-radius:3px 3px 0 0"><span class="a" style="left:6px;top:3px;letter-spacing:-0.37px">Find in Files</span></div><div class="a" style="left:1px;top:0;width:1px;height:195px;background:#707070"></div><div class="a" style="left:2px;top:1px;width:1px;height:194px;background:#fff"></div><div class="a" style="left:6px;top:23px;width:984px;height:169px;background:#fff;border-top:2px solid #8c8c8c;border-left:2px solid #8c8c8c;border-right:2px solid #fcfcfa;border-bottom:2px solid #fcfcfa"></div><div class="a" style="left:6px;top:192px;width:985px;height:1px;background:#a0a0a0"></div><div class="a" style="left:990px;top:23px;width:1px;height:170px;background:#a0a0a0"></div><span class="a" style="left:8px;top:26px;font-size:13px;white-space:pre;letter-spacing:0.29px">Loaded C:\Fordító\16F886_SMD\prop_bright.cof.</span></div></div>

<!-- ============ STATUS ============ -->
<div class="a" style="left:0;top:718px;width:1024px;height:20px;background:#ece9d8;border-top:1px solid #fff">
  <div class="ssep" style="left:82px"></div>
  <div class="ssep" style="left:169px"></div>
  <span class="st" style="left:173px">PIC16F886</span>
  <div class="ssep" style="left:290px"></div>
  <div class="ssep" style="left:370px"></div>
  <span class="st" style="left:375px">W:0</span>
  <div class="ssep" style="left:438px"></div>
  <span class="st" style="left:444px">z dc c</span>
  <div class="ssep" style="left:513px"></div>
  <div class="ssep" style="left:551px"></div>
  <div class="ssep" style="left:595px"></div>
  <span class="st" style="left:600px">bank 0</span>
  <div class="ssep" style="left:639px"></div>
  <span class="st" style="left:644px">Ln 1, Col 1</span>
  <div class="ssep" style="left:731px"></div>
  <span class="st" style="left:736px">INS</span>
  <div class="ssep" style="left:760px"></div>
  <span class="st" style="left:765px">WR</span>
  <div class="ssep" style="left:785px"></div>
</div>

<div class="a" style="left:0;top:738px;width:1024px;height:30px;background:linear-gradient(#3a6fd8 0,#5a94f0 1px,#3b7ae8 3px,#2c66dc 8px,#2860d8 20px,#2658d0 27px,#1c4cc0 30px)"></div><div class="a" style="left:0;top:738px;width:98px;height:30px;border-radius:0 12px 12px 0;background:linear-gradient(#3f8f3f 0,#74c474 1px,#52ae52 4px,#42a042 10px,#3a983a 20px,#338c33 26px,#2a7c2a 30px);box-shadow:inset -3px 0 4px #2a6a2a"></div><svg style="left:10px;top:744px" width="20" height="18"><path d="M4 1 Q7 0 9.5 1.5 L8 8 Q5.5 6.5 2.5 7.5Z" fill="#f05020"/><path d="M11 2 Q14 3 18 1.5 L16.5 8.5 Q13 10 9.8 8.6Z" fill="#70c030"/><path d="M2.2 8.8 Q5 8 7.8 9.5 L6.5 16 Q4 14.5 0.8 15.5Z" fill="#3080e8"/><path d="M9.5 10 Q12.5 11.5 16.2 10 L15 17 Q11.5 18 8.2 16.5Z" fill="#f8c020"/></svg><span class="a" style="left:34px;top:742px;color:#fff;font-weight:bold;font-style:italic;font-size:18.5px;text-shadow:1px 1px 1px #1a4a1a;letter-spacing:-0.3px">Start</span><svg style="left:111px;top:745px" width="16" height="16"><path d="M3 1 Q8 -0.5 13 1.5 Q15 7 13 13 Q8 15.5 3 14 Q0.5 8 3 1Z" fill="#f4f8ff" stroke="#7a9cd8" stroke-width="0.8"/><path d="M10 4.5 Q6 3 5 6 Q4.5 10 8 10.5 Q10 10.5 10.5 9" stroke="#3a5a9a" stroke-width="1.6" fill="none"/><rect x="5.5" y="7" width="3" height="1.5" fill="#000"/><circle cx="13.5" cy="5" r="1.2" fill="#e04040"/></svg><svg style="left:133px;top:744px" width="18" height="18"><circle cx="9.5" cy="9.5" r="5.5" fill="#2a9ae8"/><path d="M5.5 9 H13.5 Q13.5 5.5 9.5 5.5 Q6 5.5 5.5 9Z" fill="#d8f0ff"/><rect x="7" y="7.5" width="5" height="1.5" fill="#2a9ae8"/><path d="M5 10.5 H9" stroke="#d8f0ff" stroke-width="1"/><path d="M3 16.5 Q0 13 6 6 Q12 0 16 2 Q17.5 4 14.5 8" stroke="#d8c060" stroke-width="1.6" fill="none"/></svg><svg style="left:157px;top:745px" width="16" height="16"><defs><linearGradient id="ink" x1="0" y1="0" x2="0" y2="1"><stop offset="0" stop-color="#fff"/><stop offset="0.6" stop-color="#333"/></linearGradient></defs><path d="M8 0.5 L15 7.5 L10 11 V13.5 H6 V11 L1 7.5Z" fill="#000"/><path d="M8 2.5 L12 6.5 L8 8.5 L4 6.5Z" fill="url(#ink)"/><rect x="5.5" y="13" width="5" height="2.5" rx="1" fill="#000"/><rect x="3" y="12" width="1.5" height="1.5" fill="#000"/><rect x="12" y="12" width="1.5" height="1.5" fill="#000"/></svg><svg style="left:185px;top:745px" width="9" height="6"><path d="M0.5 0.5 L3 3 L0.5 5.5 M4.5 0.5 L7 3 L4.5 5.5" stroke="#b8d4ff" stroke-width="1.3" fill="none"/></svg><div class="task" style="left:201px;width:159px;"><svg style="left:9px;top:4px" width="17" height="15"><path d="M0.5 2.5 L2.5 0.5 H6 L7 1.5 H14.5 V13.5 H0.5Z" fill="#f8d870" stroke="#b08830"/><path d="M0.5 13.5 L2.5 5.5 H16 L14.5 13.5Z" fill="#fce8a0" stroke="#b08830"/></svg><span style="left:28px">16F886_SMD</span></div><div class="task" style="left:361px;width:156px;"><svg style="left:9px;top:3px" width="17" height="17"><ellipse cx="8.5" cy="9" rx="6" ry="6" fill="#2d8ce8"/><ellipse cx="8.5" cy="8.5" rx="3.2" ry="2" fill="#fff"/><path d="M1.5 16 Q-1 10 9 4 Q15 0.5 16.5 2.5" stroke="#e0b020" stroke-width="1.5" fill="none"/></svg><span style="left:28px;letter-spacing:-0.1px">[2] Propeller Clock - H...</span></div><div class="task" style="left:521px;width:159px;background:linear-gradient(#1c48b0 0,#1e4fbf 3px,#2150c0 20px,#2454c4 24px);box-shadow:inset 1px 1px 2px #10307a"><svg style="left:9px;top:4px" width="16" height="16" shape-rendering="crispEdges"><rect x="0" y="0" width="16" height="16" fill="#1c1cb0"/><rect x="0" y="0" width="16" height="3" fill="#d82030"/><path d="M1 1 H3 M4 1 H6 M7 1 H8 M9 1 H10 M11 1 H13" stroke="#ffd0d0" stroke-width="1.2"/><path d="M9 3 H16 V14Z" fill="#e01818"/><circle cx="6.5" cy="11" r="5" fill="#d01830"/><path d="M1.5 13 L4 8.5 L6 12 L8.5 8 L10.5 11.5 L12.5 8.5 M3 10.5 L5 14 M7 10 L9 14" stroke="#fff" stroke-width="1.5" fill="none" shape-rendering="auto"/></svg><span style="left:29px;letter-spacing:-0.1px">01 - MPLAB IDE v8.33</span></div><div class="a" style="left:967px;top:738px;width:57px;height:30px;background:linear-gradient(#1890e8 0,#30b0f8 1px,#1ca0f0 4px,#1494e8 20px,#1288e0 30px);border-left:1px solid #1060c0"></div><div class="a" style="left:959px;top:744px;width:19px;height:19px;border-radius:50%;background:radial-gradient(circle at 40% 35%,#7ab8f8,#2a78e0 60%,#1a58c0);border:1px solid #a8d0ff"><svg style="left:5px;top:4px" width="8" height="10"><path d="M6 1 L2 4.5 L6 8" stroke="#fff" stroke-width="2.2" fill="none"/></svg></div><span class="a" style="left:982px;top:747px;color:#fff;font-size:11px;letter-spacing:0.2px">21:57</span>
</body></html>
